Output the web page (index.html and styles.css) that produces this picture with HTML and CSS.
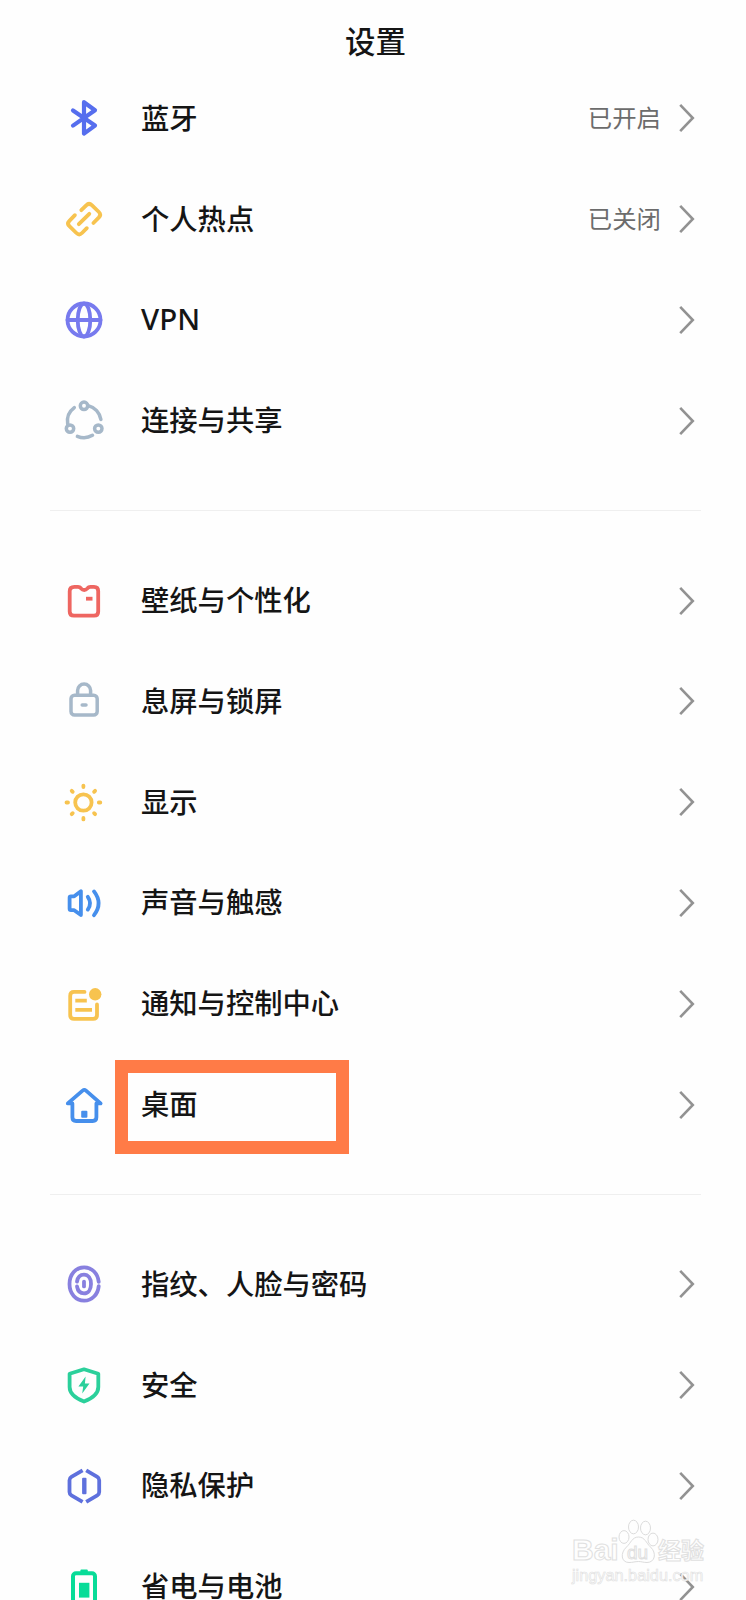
FILE: index.html
```html
<!DOCTYPE html>
<html lang="zh-CN">
<head>
    <meta charset="UTF-8">
    <meta name="viewport" content="width=device-width, initial-scale=1.0">
    <title>设置</title>
    <link rel="stylesheet" href="styles.css">
</head>
<body>
    <svg class="defs" width="0" height="0">
        <symbol id="arrow" viewBox="0 0 16 30">
            <path d="M1.2 1.9L13.8 15L1.2 28.1" fill="none" stroke="#929292" stroke-width="2.6"/>
        </symbol>
    </svg>

    <div class="header">设置</div>

    <div class="group">
        <div class="row">
            <svg class="icon bluetooth" viewBox="0 0 44 44">
                <path d="M11 14.4L33 29.6L22 37.6V6.2L33 14.2L11 29.6"/>
            </svg>
            <div class="name">蓝牙</div>
            <div class="value">已开启</div>
            <svg class="arrow"><use href="#arrow"/></svg>
        </div>
        <div class="row">
            <svg class="icon yellow" viewBox="0 0 44 44">
                <path d="M19.3 13.2L24.2 8.3Q27 5.5 29.8 8.2L36.9 15Q39.5 17.6 36.9 20.4L31.4 26M24.8 31.2L20 36Q17.2 38.8 14.4 36L7.4 29.2Q4.7 26.5 7.4 23.8L12.9 18.2M16.8 27.2L27.3 16.8"/>
            </svg>
            <div class="name">个人热点</div>
            <div class="value">已关闭</div>
            <svg class="arrow"><use href="#arrow"/></svg>
        </div>
        <div class="row">
            <svg class="icon vpn" viewBox="0 0 44 44">
                <circle cx="22" cy="22" r="16.5"/>
                <ellipse cx="22" cy="22" rx="6.3" ry="16.5"/>
                <path d="M5.5 22H38.5"/>
            </svg>
            <div class="name latin">VPN</div>
            <svg class="arrow"><use href="#arrow"/></svg>
        </div>
        <div class="row">
            <svg class="icon gray" viewBox="0 0 44 44">
                <circle cx="22" cy="6.8" r="3.7"/>
                <circle cx="8" cy="29.6" r="3.7"/>
                <circle cx="36.3" cy="29.6" r="3.7"/>
                <path d="M12.3 8.6A17 17 0 0 0 5.7 25.2M26.2 6.6A17 17 0 0 1 38.9 20.5M15.4 37.3A17 17 0 0 0 30.5 36.3"/>
            </svg>
            <div class="name">连接与共享</div>
            <svg class="arrow"><use href="#arrow"/></svg>
        </div>
    </div>

    <div class="group">
        <div class="row">
            <svg class="icon red" viewBox="0 0 44 44">
                <path d="M12.5 7.8H16Q17.8 7.8 18.8 9.2Q22.2 12.8 25.6 9.2Q26.6 7.8 28.4 7.8H32Q36.2 7.8 36.2 12V32.4Q36.2 36.7 32 36.7H12Q7.7 36.7 7.7 32.4V12.2Q7.7 7.8 12.5 7.8Z"/>
                <path class="flat" d="M24 19.7H30.5"/>
            </svg>
            <div class="name">壁纸与个性化</div>
            <svg class="arrow"><use href="#arrow"/></svg>
        </div>
        <div class="row">
            <svg class="icon gray" viewBox="0 0 44 44">
                <rect x="9" y="16.2" width="26.2" height="19.8" rx="3.5"/>
                <path d="M15.6 16V11.6A6.5 6.5 0 0 1 28.6 11.6V16M20.2 26H24"/>
            </svg>
            <div class="name">息屏与锁屏</div>
            <svg class="arrow"><use href="#arrow"/></svg>
        </div>
        <div class="row">
            <svg class="icon yellow" viewBox="0 0 44 44">
                <g transform="translate(21.4 22.5)">
                    <circle cx="0" cy="0" r="8.2"/>
                    <path d="M0 -16.9V-15.4M0 16.9V15.4M-16.9 0H-15.4M16.9 0H15.4M-11.7 -11.7L-10.7 -10.7M11.7 -11.7L10.7 -10.7M-11.7 11.7L-10.7 10.7M11.7 11.7L10.7 10.7"/>
                </g>
            </svg>
            <div class="name">显示</div>
            <svg class="arrow"><use href="#arrow"/></svg>
        </div>
        <div class="row">
            <svg class="icon blue" viewBox="0 0 44 44">
                <path d="M9 15.3H12.2L18.9 10.2V34L12.2 29.2H9Q7.6 29.2 7.6 27.8V16.7Q7.6 15.3 9 15.3Z"/>
                <path d="M25.8 15.8Q30.3 22.2 25.8 28.6M32 10.4Q41.2 22.2 32 34.2"/>
            </svg>
            <div class="name">声音与触感</div>
            <svg class="arrow"><use href="#arrow"/></svg>
        </div>
        <div class="row">
            <svg class="icon yellow" viewBox="0 0 44 44">
                <path d="M22.5 9.9H12Q8.2 9.9 8.2 13.7V33Q8.2 36.9 12 36.9H31.2Q35 36.9 35 33V22.4"/>
                <path class="flat" d="M13.3 18.7H24.8M13.3 27.8H30"/>
                <circle class="solid" cx="33.2" cy="12.3" r="6.2"/>
            </svg>
            <div class="name">通知与控制中心</div>
            <svg class="arrow"><use href="#arrow"/></svg>
        </div>
        <div class="row">
            <svg class="icon blue" viewBox="0 0 44 44">
                <path d="M10.4 20.4H5.8L20.6 7.6Q22.3 6.2 24 7.6L38.6 20.4H34.4V34.3Q34.4 38 30.7 38H14.1Q10.4 38 10.4 34.3Z"/>
                <rect class="solid" x="19.2" y="27.8" width="6.2" height="7" rx="1"/>
            </svg>
            <div class="name">桌面</div>
            <svg class="arrow"><use href="#arrow"/></svg>
            <div class="mark"></div>
        </div>
    </div>

    <div class="group">
        <div class="row">
            <svg class="icon purple" viewBox="0 0 44 44">
                <path d="M36.7 19.8C35.9 11.6 30 5.3 22.2 5.3C13.8 5.3 7.5 12.3 7.5 22S13.8 38.7 22.2 38.7C30 38.7 35.9 32.4 36.7 24.2"/>
                <path d="M15 19.6C15.7 15.2 18.4 12.6 22 12.6C26.2 12.6 29 16.4 29 22S26.2 31.4 22 31.4C18.4 31.4 15.7 28.8 15 24.4"/>
                <path d="M22 19.6V24.4"/>
            </svg>
            <div class="name">指纹、人脸与密码</div>
            <svg class="arrow"><use href="#arrow"/></svg>
        </div>
        <div class="row">
            <svg class="icon green" viewBox="0 0 44 44">
                <path d="M22 6.3L36.3 10.8V24C36.3 31 31.2 35 22 38.6C12.8 35 7.6 31 7.6 24V10.8Z"/>
                <path class="solid" d="M23.6 13.6L16.4 23.4H21.2L20.2 30.5L27.5 20.6H22.9Z"/>
            </svg>
            <div class="name">安全</div>
            <svg class="arrow"><use href="#arrow"/></svg>
        </div>
        <div class="row">
            <svg class="icon indigo" viewBox="0 0 44 44">
                <path class="flat" d="M20.6 6.4L9.4 12.9Q7.5 14 7.5 16.2V28Q7.5 30.2 9.4 31.3L20.6 37.8M24.2 6.4L35.3 12.9Q37.2 14 37.2 16.2V28Q37.2 30.2 35.3 31.3L24.2 37.8"/>
                <rect class="solid" x="20.1" y="13.8" width="4.4" height="16.4" rx="1"/>
            </svg>
            <div class="name">隐私保护</div>
            <svg class="arrow"><use href="#arrow"/></svg>
        </div>
        <div class="row">
            <svg class="icon mint" viewBox="0 0 44 44">
                <rect x="11" y="8.3" width="22" height="32" rx="3"/>
                <rect class="solid" x="18.4" y="4.4" width="7.4" height="4" rx="1"/>
                <rect class="solid" x="17" y="17.8" width="10.4" height="14.8"/>
            </svg>
            <div class="name">省电与电池</div>
            <svg class="arrow"><use href="#arrow"/></svg>
        </div>
    </div>

    <div class="watermark">
        <div class="wm-top">
            <span class="wm-bai">Bai</span>
            <span class="wm-paw">
                <svg viewBox="0 0 42 46">
                    <ellipse cx="6" cy="18" rx="5" ry="6.4"/>
                    <ellipse cx="15.5" cy="8" rx="5" ry="6.8"/>
                    <ellipse cx="27.5" cy="9" rx="5" ry="6.8"/>
                    <ellipse cx="35" cy="20.5" rx="5" ry="6.4"/>
                    <path d="M20.5 18C27 18 28 24 32.5 28C39 34 37 43.5 29 43.5C25 43.5 24 42.5 20.5 42.5S15 43.5 11 43.5C3 43.5 2 34 8.5 28C13 24 14 18 20.5 18Z"/>
                </svg>
                <span class="wm-du">du</span>
            </span>
            <span class="wm-jy">经验</span>
        </div>
        <div class="wm-url">jingyan.baidu.com</div>
    </div>
</body>
</html>
```

FILE: styles.css
```css
* {
    margin: 0;
    padding: 0;
    box-sizing: border-box;
}
body {
    position: relative;
    height: 1600px;
    overflow: hidden;
    background-color: #fefefe;
    color: #151515;
    font-family: "Noto Sans CJK SC", sans-serif;
}
.defs {
    position: absolute;
}
.header {
    height: 68px;
    padding-top: 18px;
    padding-left: 5px;
    line-height: 44px;
    text-align: center;
    font-size: 30.5px;
    font-weight: 500;
}
.group {
    margin: 0 45px 0 50px;
}
.group + .group {
    margin-top: 39px;
    padding-top: 39px;
    border-top: 1px solid #efefef;
}
.row {
    position: relative;
    display: flex;
    align-items: center;
    height: 100.8px;
    padding: 0 6px 0 12px;
}
.icon {
    flex: none;
    width: 44px;
    height: 44px;
    margin-right: 35px;
    fill: none;
    stroke: currentColor;
    stroke-width: 3.8;
    stroke-linecap: round;
    stroke-linejoin: round;
}
.icon .flat {
    stroke-linecap: butt;
}
.icon .solid {
    fill: currentColor;
    stroke: none;
}
.bluetooth {
    color: #566eee;
    stroke-width: 4.2;
}
.yellow {
    color: #f7c34f;
}
.vpn {
    color: #777aee;
}
.gray {
    color: #a6b8c9;
    stroke-width: 3.5;
}
.red {
    color: #ee6661;
}
.blue {
    color: #468fec;
}
.purple {
    color: #8880df;
}
.green {
    color: #2bd09b;
}
.indigo {
    color: #5e70dd;
}
.mint {
    color: #08dc98;
    stroke-width: 4;
}
.name {
    flex: 1;
    padding-bottom: 3px;
    font-size: 28.3px;
    font-weight: 500;
    line-height: 40px;
}
.latin {
    padding-bottom: 1px;
    font-family: "Noto Sans", sans-serif;
    font-size: 29.5px;
}
.value {
    margin-right: 18px;
    padding-bottom: 2px;
    color: #6c6c6c;
    font-size: 24.4px;
    font-weight: 400;
    line-height: 36px;
}
.arrow {
    flex: none;
    width: 16px;
    height: 30px;
}
.mark {
    position: absolute;
    top: 6px;
    left: 65px;
    width: 234px;
    height: 94px;
    border: 13px solid #ff7b47;
}
.watermark {
    position: absolute;
    top: 1519px;
    left: 572px;
    width: 136px;
    color: #fefefe;
    -webkit-text-stroke: 1px #e0e0e0;
    font-family: "Liberation Sans", "Noto Sans CJK SC", sans-serif;
    font-weight: bold;
}
.wm-top {
    display: flex;
    align-items: flex-end;
    height: 46px;
}
.wm-bai {
    width: 46px;
    font-size: 30px;
    line-height: 30px;
}
.wm-paw {
    position: relative;
    width: 40px;
    height: 46px;
}
.wm-paw svg {
    width: 42px;
    height: 46px;
    fill: #fefefe;
    stroke: #dcdcdc;
    stroke-width: 1;
}
.wm-du {
    position: absolute;
    top: 24px;
    left: 9px;
    font-size: 19px;
    font-weight: normal;
    line-height: 20px;
}
.wm-jy {
    font-size: 23px;
    line-height: 28px;
}
.wm-url {
    font-size: 16.3px;
    font-weight: normal;
    line-height: 20px;
    -webkit-text-stroke: 0.6px #e0e0e0;
}
```
